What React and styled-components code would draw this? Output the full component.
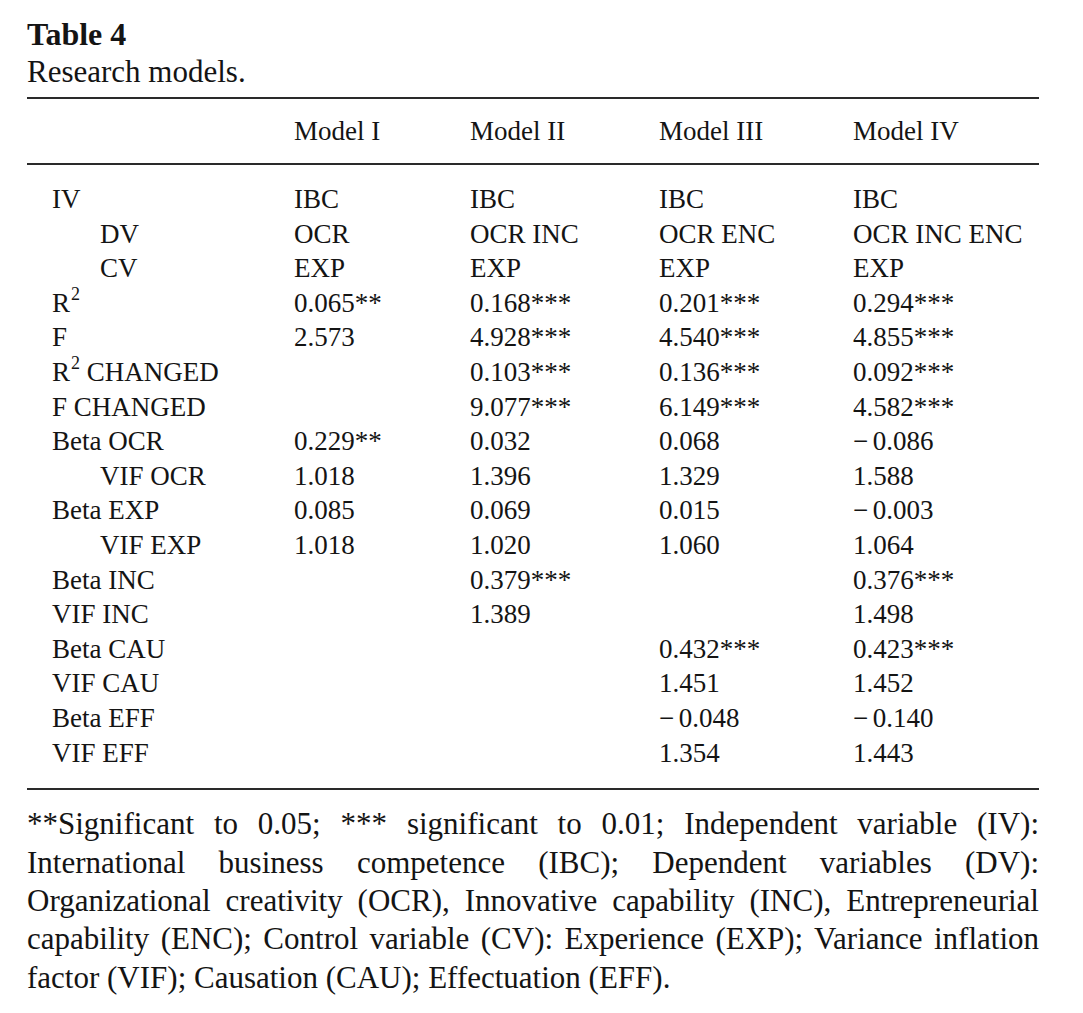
import React from "react";
import styled, { createGlobalStyle } from "styled-components";

const Global = createGlobalStyle`
  html, body { margin: 0; padding: 0; background: #fff; }
  body { font-family: "Liberation Serif", "Times New Roman", serif; color: #141414; }
`;

const Page = styled.div`
  width: 1012px;
  padding: 14px 0 0 27px;
`;

const Title = styled.div`
  font-size: 32px;
  font-weight: bold;
  line-height: 40px;
`;

const Subtitle = styled.div`
  font-size: 31px;
  line-height: 36px;
`;

const Table = styled.div`
  margin-top: 7px;
  border-top: 2px solid #2a2a2a;
  border-bottom: 2px solid #2a2a2a;
  font-size: 27px;
`;

const Grid = styled.div`
  display: grid;
  grid-template-columns: 267px 176px 189px 194px 1fr;
`;

const Head = styled(Grid)`
  height: 64px;
  align-items: center;
  border-bottom: 2px solid #2a2a2a;
`;

const Body = styled.div`
  padding: 17px 0 18px;
`;

const Row = styled(Grid)`
  height: 34.6px;
  align-items: center;
  line-height: 34.6px;
  white-space: nowrap;
`;

const Label = styled.div`
  padding-left: ${(p) => (p.$indent ? 73 : 25)}px;
`;

const Cell = styled.div``;

const Sup = styled.sup`
  font-size: 18px;
  line-height: 0;
  vertical-align: 0;
  position: relative;
  top: -12px;
  margin-left: 1px;
`;

const Note = styled.p`
  margin: 15px 0 0;
  font-size: 31px;
  line-height: 38.4px;
  text-align: justify;
`;

const R2 = ({ rest }) => (
  <>
    R<Sup>2</Sup>
    {rest}
  </>
);

const M = "\u2212\u2006";

const rows = [
  ["IV", false, ["IBC", "IBC", "IBC", "IBC"]],
  ["DV", true, ["OCR", "OCR INC", "OCR ENC", "OCR INC ENC"]],
  ["CV", true, ["EXP", "EXP", "EXP", "EXP"]],
  [<R2 key="r2" rest="" />, false, ["0.065**", "0.168***", "0.201***", "0.294***"]],
  ["F", false, ["2.573", "4.928***", "4.540***", "4.855***"]],
  [<R2 key="r2c" rest=" CHANGED" />, false, ["", "0.103***", "0.136***", "0.092***"]],
  ["F CHANGED", false, ["", "9.077***", "6.149***", "4.582***"]],
  ["Beta OCR", false, ["0.229**", "0.032", "0.068", M + "0.086"]],
  ["VIF OCR", true, ["1.018", "1.396", "1.329", "1.588"]],
  ["Beta EXP", false, ["0.085", "0.069", "0.015", M + "0.003"]],
  ["VIF EXP", true, ["1.018", "1.020", "1.060", "1.064"]],
  ["Beta INC", false, ["", "0.379***", "", "0.376***"]],
  ["VIF INC", false, ["", "1.389", "", "1.498"]],
  ["Beta CAU", false, ["", "", "0.432***", "0.423***"]],
  ["VIF CAU", false, ["", "", "1.451", "1.452"]],
  ["Beta EFF", false, ["", "", M + "0.048", M + "0.140"]],
  ["VIF EFF", false, ["", "", "1.354", "1.443"]],
];

export default function App() {
  return (
    <>
      <Global />
      <Page>
        <Title>Table 4</Title>
        <Subtitle>Research models.</Subtitle>
        <Table>
          <Head>
            <Cell />
            <Cell>Model I</Cell>
            <Cell>Model II</Cell>
            <Cell>Model III</Cell>
            <Cell>Model IV</Cell>
          </Head>
          <Body>
            {rows.map(([label, indent, vals], i) => (
              <Row key={i}>
                <Label $indent={indent}>{label}</Label>
                {vals.map((v, j) => (
                  <Cell key={j}>{v}</Cell>
                ))}
              </Row>
            ))}
          </Body>
        </Table>
        <Note>
          **Significant to 0.05; *** significant to 0.01; Independent variable (IV):
          International business competence (IBC); Dependent variables (DV):
          Organizational creativity (OCR), Innovative capability (INC), Entrepreneurial
          capability (ENC); Control variable (CV): Experience (EXP); Variance inflation
          factor (VIF); Causation (CAU); Effectuation (EFF).
        </Note>
      </Page>
    </>
  );
}
